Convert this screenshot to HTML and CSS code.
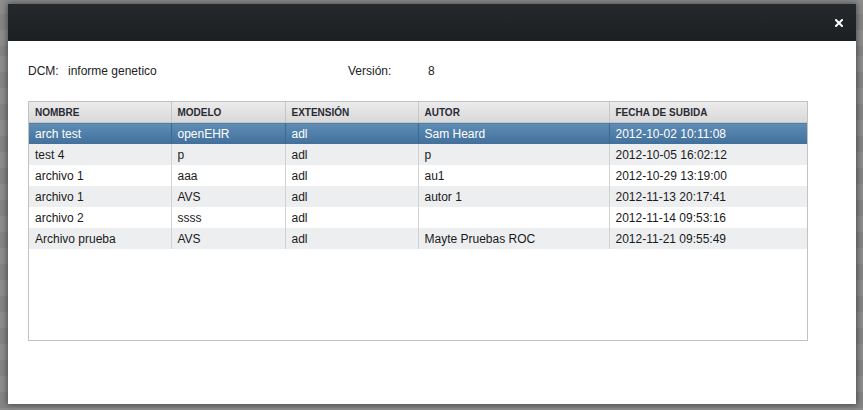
FILE: index.html
```html
<!DOCTYPE html>
<html lang="es">
<head>
<meta charset="utf-8">
<title>Archivos</title>
<link rel="stylesheet" href="styles.css">
</head>
<body>
<div class="backdrop">
  <div class="modal">
    <div class="modal-header">
      <svg class="close" width="8" height="8" viewBox="0 0 8 8"><path d="M1 1L7 7M7 1L1 7" stroke="#fff" stroke-width="2" stroke-linecap="square"/></svg>
    </div>
    <div class="modal-body">
      <div class="info">
        <span class="lbl">DCM:</span><span class="val">informe genetico</span>
        <span class="lbl ver">Versión:</span><span class="val">8</span>
      </div>
      <div class="grid">
        <table>
          <colgroup>
            <col class="c1"><col class="c2"><col class="c3"><col class="c4"><col class="c5">
          </colgroup>
          <thead>
            <tr><th>NOMBRE</th><th>MODELO</th><th>EXTENSIÓN</th><th>AUTOR</th><th>FECHA DE SUBIDA</th></tr>
          </thead>
          <tbody>
            <tr class="sel"><td>arch test</td><td>openEHR</td><td>adl</td><td>Sam Heard</td><td>2012-10-02 10:11:08</td></tr>
            <tr class="alt"><td>test 4</td><td>p</td><td>adl</td><td>p</td><td>2012-10-05 16:02:12</td></tr>
            <tr><td>archivo 1</td><td>aaa</td><td>adl</td><td>au1</td><td>2012-10-29 13:19:00</td></tr>
            <tr class="alt"><td>archivo 1</td><td>AVS</td><td>adl</td><td>autor 1</td><td>2012-11-13 20:17:41</td></tr>
            <tr><td>archivo 2</td><td>ssss</td><td>adl</td><td></td><td>2012-11-14 09:53:16</td></tr>
            <tr class="alt"><td>Archivo prueba</td><td>AVS</td><td>adl</td><td>Mayte Pruebas ROC</td><td>2012-11-21 09:55:49</td></tr>
          </tbody>
        </table>
      </div>
    </div>
  </div>
</div>
</body>
</html>
```
FILE: styles.css
```css
html, body {
  margin: 0;
  padding: 0;
  width: 863px;
  height: 410px;
  overflow: hidden;
}
body {
  background-color: #888;
  background-image: repeating-linear-gradient(to bottom, #8d8d8d 0px, #8d8d8d 16px, #858585 16px, #858585 32px);
  background-position: 0 56px;
  font-family: "Liberation Sans", Arial, sans-serif;
}
.backdrop {
  padding: 4px 7px 0 8px;
}
.modal {
  width: 848px;
  height: 400px;
  background: #fff;
  box-shadow: 0 0 6px 1px rgba(0, 0, 0, 0.45);
  display: flex;
  flex-direction: column;
}
.modal-header {
  height: 37px;
  background: linear-gradient(to bottom, #25292c, #1c1f21);
  display: flex;
  align-items: center;
  justify-content: flex-end;
  padding-right: 13px;
  flex-shrink: 0;
}
.close {
  display: block;
  margin-top: 1px;
}
.modal-body {
  padding: 23px 0 0 20px;
}
.info {
  font-size: 12px;
  line-height: 14px;
  color: #222;
  display: flex;
  height: 14px;
}
.lbl {
  width: 40px;
}
.val {
  width: 280px;
}
.ver {
  width: 80px;
}
.grid {
  margin-top: 23px;
  width: 778px;
  height: 238px;
  border: 1px solid #c2c2c2;
}
table {
  border-collapse: collapse;
  table-layout: fixed;
  width: 778px;
}
col.c1 { width: 142px; }
col.c2 { width: 114px; }
col.c3 { width: 133px; }
col.c4 { width: 191px; }
col.c5 { width: 198px; }
th {
  height: 20px;
  padding: 0 0 0 6px;
  text-align: left;
  font-size: 10px;
  font-weight: bold;
  color: #2a2a33;
  background: linear-gradient(to bottom, #ebebeb, #d9d9d9);
  border-right: 1px solid #c6c6c6;
  border-bottom: 1px solid #c6c6c6;
}
th:last-child {
  border-right: none;
}
td {
  height: 21px;
  padding: 0 0 0 6px;
  font-size: 12px;
  color: #1a1a1a;
  border-right: 1px solid #d2d2d2;
  white-space: nowrap;
  overflow: hidden;
}
td:last-child {
  border-right: none;
}
tr.alt td {
  background: #edeef0;
}
tr.sel td {
  background: linear-gradient(to bottom, #5e8db6, #416f9b);
  color: #fff;
  border-right-color: #3d6890;
}
tr.sel td:last-child {
  border-right: none;
}
```
